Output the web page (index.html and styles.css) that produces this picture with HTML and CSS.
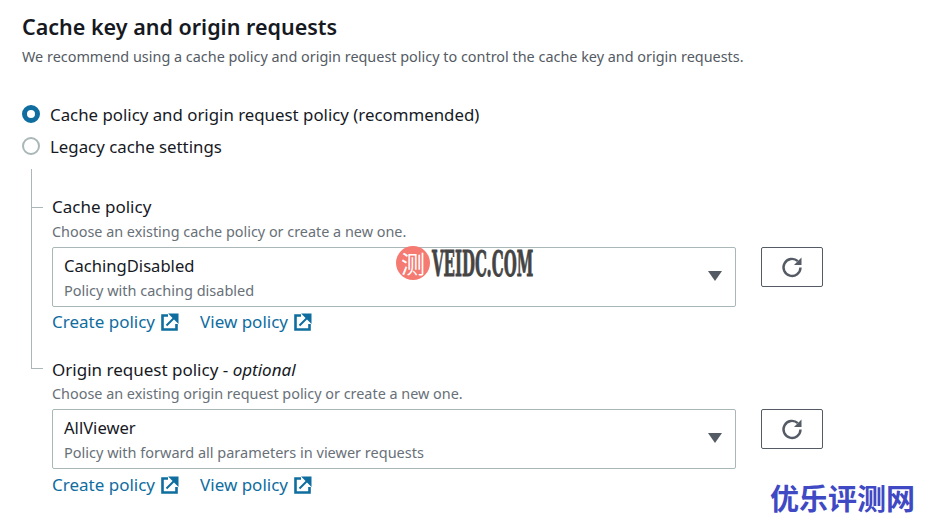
FILE: index.html
```html
<!DOCTYPE html>
<html>
  <head>
    <meta charset="utf-8">
    <link rel="stylesheet" href="styles.css">
  </head>
  <body>
  <main>
    <h2 class="title">Cache key and origin requests</h2>
    <p class="intro">We recommend using a cache policy and origin request policy to control the cache key and origin requests.</p>

    <section class="radios">
      <div class="radio-row"><span class="radio radio-on"></span>Cache policy and origin request policy (recommended)</div>
      <div class="radio-row"><span class="radio"></span>Legacy cache settings</div>
    </section>

    <section class="tree">
      <div class="field">
        <h3 class="field-label">Cache policy</h3>
        <p class="field-hint">Choose an existing cache policy or create a new one.</p>
        <div class="select-row">
          <div class="select">
            <div class="select-value">CachingDisabled</div>
            <div class="select-desc">Policy with caching disabled</div>
            <span class="caret"></span>
          </div>
          <button class="refresh" type="button">
            <svg width="24" height="24" viewBox="0 0 24 24"><path d="M20.500 12.500a8.500 8.500 0 1 1-2.700-6.300" fill="none" stroke="#545b64" stroke-width="2.400"/><path d="M21.500 2.500v7.500h-7.500z" fill="#545b64"/></svg>
          </button>
        </div>
        <div class="links">
          <a class="link">Create policy <svg class="ext" width="19" height="19" viewBox="0 0 19 19"><path d="M8 2.500H2.500v14h14V11" fill="none" stroke="#0f6d9f" stroke-width="2.600"/><path d="M10.500 1.500h7v7zM6.500 12.500l7-7" fill="#0f6d9f" stroke="#0f6d9f" stroke-width="2"/></svg></a>
          <a class="link">View policy <svg class="ext" width="19" height="19" viewBox="0 0 19 19"><path d="M8 2.500H2.500v14h14V11" fill="none" stroke="#0f6d9f" stroke-width="2.600"/><path d="M10.500 1.500h7v7zM6.500 12.500l7-7" fill="#0f6d9f" stroke="#0f6d9f" stroke-width="2"/></svg></a>
        </div>
      </div>

      <div class="field field-last">
        <h3 class="field-label">Origin request policy - <em>optional</em></h3>
        <p class="field-hint">Choose an existing origin request policy or create a new one.</p>
        <div class="select-row">
          <div class="select">
            <div class="select-value">AllViewer</div>
            <div class="select-desc">Policy with forward all parameters in viewer requests</div>
            <span class="caret"></span>
          </div>
          <button class="refresh" type="button">
            <svg width="24" height="24" viewBox="0 0 24 24"><path d="M20.500 12.500a8.500 8.500 0 1 1-2.700-6.300" fill="none" stroke="#545b64" stroke-width="2.400"/><path d="M21.500 2.500v7.500h-7.500z" fill="#545b64"/></svg>
          </button>
        </div>
        <div class="links">
          <a class="link">Create policy <svg class="ext" width="19" height="19" viewBox="0 0 19 19"><path d="M8 2.500H2.500v14h14V11" fill="none" stroke="#0f6d9f" stroke-width="2.600"/><path d="M10.500 1.500h7v7zM6.500 12.500l7-7" fill="#0f6d9f" stroke="#0f6d9f" stroke-width="2"/></svg></a>
          <a class="link">View policy <svg class="ext" width="19" height="19" viewBox="0 0 19 19"><path d="M8 2.500H2.500v14h14V11" fill="none" stroke="#0f6d9f" stroke-width="2.600"/><path d="M10.500 1.500h7v7zM6.500 12.500l7-7" fill="#0f6d9f" stroke="#0f6d9f" stroke-width="2"/></svg></a>
        </div>
      </div>
    </section>
  </main>

  <div class="mark-veidc"><span class="mark-badge">测</span><span class="mark-text">VEIDC.COM</span></div>
  <div class="mark-site">优乐评测网</div>
  </body>
</html>
```

FILE: styles.css
```css
* {
  box-sizing: border-box;
}
html, body {
  margin: 0;
  height: 525px;
  overflow: hidden;
}
body {
  font-family: "Noto Sans", sans-serif;
  background-color: #fff;
  color: #16191f;
  font-size: 16.830px;
  position: relative;
}
main {
  padding: 13px 0 0 22px;
}
.title {
  margin: 0;
  font-size: 21.500px;
  line-height: 28px;
  font-weight: 600;
}
.intro {
  margin: 6px 0 0;
  font-size: 14.420px;
  line-height: 20px;
  color: #545b64;
}
.radios {
  margin: 31px 0 1px;
}
.radio-row {
  display: flex;
  align-items: center;
  height: 32px;
}
.radio {
  width: 18px;
  height: 18px;
  border-radius: 50%;
  border: 2px solid #aab7b8;
  margin-right: 10px;
}
.radio-on {
  border: 5px solid #0f6d9f;
}
.tree {
  margin-left: 9px;
  padding: 0 0 0 21px;
  position: relative;
}
.tree::before {
  content: "";
  position: absolute;
  left: 0;
  top: 6px;
  height: 200px;
  width: 1px;
  background-color: #aab7b8;
}
.field {
  position: relative;
  padding-top: 33px;
}
.field::before {
  content: "";
  position: absolute;
  left: -21px;
  top: 44px;
  width: 12px;
  height: 1px;
  background-color: #aab7b8;
}
.field-last {
  padding-top: 25px;
}
.field-last::before {
  top: 34px;
}
.field-label {
  margin: 0;
  font-size: 17px;
  line-height: 22px;
  font-weight: 400;
}
.field-hint {
  margin: 4px 0 5px;
  font-size: 14.400px;
  line-height: 20px;
  color: #687078;
}
.field-last .field-hint {
  margin-top: 3px;
}
.select-row {
  display: flex;
  align-items: flex-start;
  gap: 25px;
}
.select {
  width: 684px;
  height: 60px;
  border: 1px solid #aab7b8;
  border-radius: 2px;
  padding: 6px 11px;
  position: relative;
}
.select-value {
  font-size: 16.600px;
  line-height: 24px;
}
.select-desc {
  font-size: 14.500px;
  line-height: 20px;
  margin-top: 2px;
  color: #687078;
}
.caret {
  position: absolute;
  right: 13px;
  top: 23px;
  border-left: 7px solid transparent;
  border-right: 7px solid transparent;
  border-top: 10px solid #545b64;
}
.refresh {
  width: 62px;
  height: 40px;
  border: 1px solid #545b64;
  border-radius: 2px;
  background-color: #fff;
  display: flex;
  align-items: center;
  justify-content: center;
  padding: 0;
}
.links {
  display: flex;
  gap: 21px;
  margin-top: 3px;
  font-size: 17px;
  line-height: 24px;
}
.field-last .links {
  margin-top: 4px;
}
.link {
  color: #0f6d9f;
  display: flex;
  align-items: center;
  gap: 5px;
  white-space: nowrap;
}
.mark-veidc {
  position: absolute;
  left: 396px;
  top: 246px;
  display: flex;
  align-items: center;
}
.mark-badge {
  width: 34px;
  height: 34px;
  border-radius: 50%;
  background-color: #f47a72;
  color: #fff;
  font-family: "Noto Sans CJK SC", sans-serif;
  font-size: 24px;
  line-height: 34px;
  text-align: center;
}
.mark-text {
  font-family: "DejaVu Serif", serif;
  font-weight: 700;
  font-size: 36px;
  line-height: 34px;
  color: #444;
  -webkit-text-stroke: 1px #444;
  display: inline-block;
  transform: scaleX(0.415);
  transform-origin: left center;
  margin-left: 2px;
}
.mark-site {
  position: absolute;
  left: 770px;
  top: 479px;
  font-family: "Noto Sans CJK SC", sans-serif;
  font-weight: 700;
  font-size: 29px;
  line-height: 36px;
  color: #4049c4;
}
```
